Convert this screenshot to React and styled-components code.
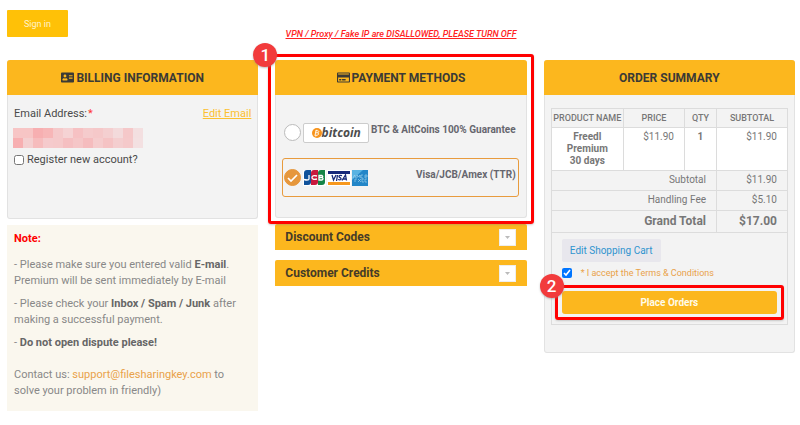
import { useState } from 'react';
import styled, { createGlobalStyle } from 'styled-components';
import { FaAddressCard, FaRegCreditCard } from 'react-icons/fa';

const GlobalStyle = createGlobalStyle`
	* {
		box-sizing: border-box;
	}

	body {
		margin: 0;
		background: #fff;
		color: #777;
		font-family: Roboto, 'Noto Sans', sans-serif;
		font-size: 11px;
		line-height: 16px;
	}

	button,
	input {
		font-family: inherit;
		margin: 0;
	}

	p {
		margin: 0;
	}
`;

const Page = styled.main`
	padding: 10px 5px 14px 7px;
`;

const TopBar = styled.div`
	height: 50px;
	display: grid;
	grid-template-columns: 1fr auto 1fr;
	align-items: start;
`;

const SignInButton = styled.button`
	justify-self: start;
	width: 61px;
	height: 27px;
	border: 0;
	border-radius: 1px;
	background: #ffc107;
	color: #fff3cd;
	font-size: 9px;
	cursor: pointer;
`;

const Warning = styled.p`
	padding-top: 16px;
	color: #f22;
	font-size: 9px;
	line-height: 16px;
	font-style: italic;
	font-weight: 500;
	text-decoration: underline;
`;

const Columns = styled.div`
	display: grid;
	grid-template-columns: repeat(3, minmax(0, 1fr));
	gap: 17px;
	align-items: start;
`;

const Column = styled.div`
	display: flex;
	flex-direction: column;
`;

const Card = styled.section`
	min-height: ${({ $minHeight }) => $minHeight || 0}px;
	border: 1px solid #e2e2e2;
	border-top: 0;
	border-radius: 3px;
	background: #f3f3f3;
`;

const CardTitle = styled.h2`
	display: flex;
	align-items: center;
	justify-content: center;
	gap: 2px;
	height: 35px;
	margin: 0 -1px;
	border-radius: 3px 3px 0 0;
	background: #fcb71e;
	color: #3b3a35;
	font-size: 12px;
	font-weight: 700;

	svg {
		width: 13px;
		height: 13px;
	}
`;

const BillingBody = styled.div`
	display: flex;
	flex-direction: column;
	padding: 11px 6px;
	color: #4a4a4a;
`;

const EmailRow = styled.div`
	display: flex;
	justify-content: space-between;
	margin-bottom: 6px;
`;

const Required = styled.span`
	padding-left: 1px;
	color: #f33;
`;

const EditLink = styled.a`
	color: #fcc02f;
`;

const Mosaic = styled.svg`
	display: block;
	width: 130px;
	height: 20px;
	margin: 0 -1px 4px;
`;

const CheckLabel = styled.label`
	display: flex;
	align-items: center;
	gap: 3px;

	input {
		width: 10px;
		height: 10px;
	}
`;

const Note = styled.section`
	display: flex;
	flex-direction: column;
	gap: 7px;
	margin-top: 6px;
	padding: 6px 7px 12px;
	background: #faf7ee;
	color: #888;

	strong {
		color: #666;
	}

	a {
		color: #e9a24a;
		text-decoration: none;
	}
`;

const NoteTitle = styled.h3`
	margin: 0 0 3px;
	color: #f00;
	font-size: 11px;
`;

const Contact = styled.p`
	padding-top: 9px;
`;

const Highlighted = styled.div`
	position: relative;
`;

const RedFrame = styled.div`
	position: absolute;
	inset: -6px -7px;
	border: 3px solid #f00;
	border-radius: 3px;
	box-shadow: 0 1px 2px #8886;
	pointer-events: none;
`;

const StepBadge = styled.span`
	position: absolute;
	top: -17px;
	left: -22px;
	width: 24px;
	height: 24px;
	border-radius: 50%;
	background: #f23b3c;
	color: #fff;
	font-size: 17px;
	font-weight: 500;
	line-height: 24px;
	text-align: center;
	box-shadow: 0 1px 2px #8888;
`;

const Methods = styled.div`
	display: flex;
	flex-direction: column;
	gap: 6px;
	padding: 18px 7px 20px 6px;
`;

const Method = styled.label`
	display: flex;
	align-items: center;
	height: 39px;
	gap: 2px;
	padding: 0 2px 0 1px;
	border: 1px solid ${({ $active }) => ($active ? '#e89b3d' : 'transparent')};
	border-radius: 3px;
	color: #66666e;
	cursor: pointer;
`;

const Radio = styled.input`
	appearance: none;
	flex: none;
	width: 17px;
	height: 17px;
	border: 1px solid #bbb;
	border-radius: 50%;
	background: #fff;

	&:checked {
		border-color: #e6973c;
		background: #e6973c
			url("data:image/svg+xml,%3Csvg xmlns='http://www.w3.org/2000/svg' viewBox='0 0 15 15' fill='none' stroke='white' stroke-width='1.7'%3E%3Cpath d='M3 8l3 3 6-6'/%3E%3C/svg%3E");
	}
`;

const MethodName = styled.span`
	align-self: flex-start;
	flex: 1;
	padding-top: 8px;
	font-size: 10px;
	font-weight: 700;
	text-align: right;
	white-space: nowrap;
`;

const BitcoinLogo = styled.span`
	display: flex;
	align-items: center;
	justify-content: center;
	width: 66px;
	height: 20px;
	border: 1px solid #ccc;
	border-radius: 2px;
	background: #fff;
	color: #4d4d4d;
	font-family: 'Open Sans', sans-serif;
	font-size: 12px;
	font-style: italic;
	font-weight: 700;
`;

const CardLogos = styled.svg`
	flex: none;
	width: 66px;
	height: 16px;
`;

const Folded = styled.section`
	display: flex;
	align-items: center;
	justify-content: space-between;
	height: 26px;
	margin-top: ${({ $gap }) => $gap}px;
	padding: 0 11px 0 10px;
	border-radius: 2px 2px 0 0;
	background: #fcb71e;
	color: #453b28;

	h3 {
		margin: 0;
		font-size: 12px;
	}
`;

const FoldButton = styled.button`
	display: flex;
	align-items: center;
	justify-content: center;
	width: 17px;
	height: 17px;
	padding: 0;
	border: 1px solid #eee;
	background: #fff;
`;

const OrderBody = styled.div`
	padding: 13px 6px 27px;
`;

const OrderTable = styled.table`
	width: 100%;
	border-collapse: collapse;
	table-layout: fixed;
	font-size: 10px;
	line-height: 12px;
	color: #777;

	th,
	td {
		border: 1px solid #dcdcdc;
		padding: 3px 10px;
		text-align: right;
		vertical-align: top;
	}

	thead th {
		height: 19px;
		padding: 3px 0;
		font-size: 9px;
		font-weight: 500;
		text-align: center;
		white-space: nowrap;
	}

	tbody td {
		height: 43px;
		background: #fff;
	}

	tfoot th {
		font-weight: 400;
	}

	tfoot td,
	tfoot th {
		height: 20px;
	}
`;

const Product = styled.td`
	&& {
		font-weight: 700;
		text-align: center;
	}
`;

const GrandTotal = styled.tr`
	&& th,
	&& td {
		height: 22px;
		padding-top: 2px;
		padding-bottom: 2px;
		font-size: 12px;
		line-height: 16px;
		font-weight: 700;
	}
`;

const OrderActions = styled.div`
	display: flex;
	flex-direction: column;
	align-items: stretch;
	padding: 6px 10px 10px;
	border: 1px solid #dcdcdc;
	border-top: 0;
`;

const CartButton = styled.button`
	align-self: flex-start;
	width: 99px;
	height: 23px;
	padding: 0;
	border: 0;
	border-radius: 2px;
	background: #e8e7ed;
	color: #2f94cf;
	font-size: 10px;
`;

const Terms = styled.label`
	display: flex;
	align-items: center;
	gap: 9px;
	height: 22px;
	margin-bottom: 7px;
	color: #e9a24a;
	font-size: 9px;

	input {
		width: 10px;
		height: 10px;
	}
`;

const PlaceButton = styled.button`
	display: block;
	width: 100%;
	height: 23px;
	border: 0;
	border-radius: 3px;
	background: #fcb71e;
	color: #fffbe8;
	font-size: 10px;
	font-weight: 700;
`;

const mosaicRows = [
	['#f7c5c5', '#f7c5c5', '#f7afb1', '#f7b6b7', '#f5c9ca', '#f5d3d4', '#f6c1c3', '#f5cbcc', '#f5c8c9', '#f4cfd0', '#f3dadb', '#f5c8c9', '#f3dfe0'],
	['#f7afb1', '#f4cfd0', '#f6bcbd', '#f5cacc', '#f5c9ca', '#f5bfc1', '#f5c6c7', '#f5bcbe', '#f5cccd', '#f5c3c4', '#f4cecf', '#f5c9ca', '#f3e0e1'],
];

const HiddenEmail = () => (
	<Mosaic viewBox="0 0 130 20" shapeRendering="crispEdges" aria-hidden="true">
		{mosaicRows.map((row, y) =>
			row.map((color, x) => (
				<rect key={`${x}-${y}`} x={x * 10} y={y * 10} width="10" height="10" fill={color} />
			)),
		)}
	</Mosaic>
);

const BitcoinMark = () => (
	<svg width="10" height="10" viewBox="0 0 20 20" aria-hidden="true">
		<circle cx="10" cy="10" r="10" fill="#f7931a" />
		<path
			d="M8 5l-2 10M7 5.500h4.500c3 0 2.500 4-.5 4H7M11 9.500c3.500 0 2.500 5-1 5H5.500M9.500 3.500l-.4 2M8 15l-.4 2"
			fill="none"
			stroke="#fff"
			strokeWidth="1.800"
		/>
	</svg>
);

const CardBrands = () => (
	<CardLogos viewBox="0 0 66 16" aria-hidden="true">
		<rect width="23" height="16" rx="1" fill="#fff" />
		<path d="M4 0h4v12q0 3-3 3H1V3q0-3 3-3z" fill="#10529b" />
		<path d="M11 0h4v12q0 3-3 3H8V3q0-3 3-3z" fill="#c8193d" />
		<path d="M18 0h4v12q0 3-3 3h-4V3q0-3 3-3z" fill="#158447" />
		<path
			d="M6 5v4q0 1-2 1-1 0-3-.5M14 6q-5-1-5 1.500t5 1.500M16 5.500h3q1.500 1 0 2h-3zM16 7.500h3q2 1 0 2.500h-3z"
			fill="none"
			stroke="#fff"
			strokeWidth="1.300"
		/>
		<rect x="24" width="24" height="16" fill="#fff" />
		<path d="M25 1h22v3H25z" fill="#17297a" />
		<path d="M25 12h22v3H25z" fill="#f7981d" />
		<path
			d="M29 5l1.500 5L33 5M34.500 5l-1 6M39 5.700c-3-1-4 1-2 2s1 3-2 1.800M39 10.500L42.500 5l1 5.500M40.500 9h2.500"
			fill="none"
			stroke="#17297a"
			strokeWidth="1.300"
		/>
		<rect x="49" width="16" height="16" fill="#2386c8" />
		<path d="M49 0h11L49 10z" fill="#59b3e2" />
		<path
			d="M50 8l1.500-3L53 8M54 8V5l1.500 2L57 5v3M60 5h-2v3h2M62 8V5h2v2h-2M52 9v3M52 9h2M55 12l3-3M55 9l3 3M61 9h-2v3h2M64 9h-2v3h2"
			fill="none"
			stroke="#a9d8ef"
			strokeWidth=".6"
		/>
	</CardLogos>
);

const FoldedPanel = ({ title, gap }) => (
	<Folded $gap={gap}>
		<h3>{title}</h3>
		<FoldButton type="button" aria-label={title}>
			<svg width="5" height="3" viewBox="0 0 5 3">
				<path d="M0 0h5L2.500 3z" fill="#bbb" />
			</svg>
		</FoldButton>
	</Folded>
);

const Billing = () => (
	<Column>
		<Card $minHeight={159}>
			<CardTitle>
				<FaAddressCard />
				BILLING INFORMATION
			</CardTitle>
			<BillingBody>
				<EmailRow>
					<span>
						Email Address:<Required>*</Required>
					</span>
					<EditLink href="#email">Edit Email</EditLink>
				</EmailRow>
				<HiddenEmail />
				<CheckLabel>
					<input type="checkbox" />
					Register new account?
				</CheckLabel>
			</BillingBody>
		</Card>
		<Note>
			<NoteTitle>Note:</NoteTitle>
			<p>
				- Please make sure you entered valid <strong>E-mail</strong>.<br />
				Premium will be sent immediately by E-mail
			</p>
			<p>
				- Please check your <strong>Inbox / Spam / Junk</strong> after
				<br />
				making a successful payment.
			</p>
			<p>
				- <strong>Do not open dispute please!</strong>
			</p>
			<Contact>
				Contact us: <a href="mailto:support@filesharingkey.com">support@filesharingkey.com</a> to
				<br />
				solve your problem in friendly)
			</Contact>
		</Note>
	</Column>
);

const Payment = () => {
	const [method, setMethod] = useState('card');

	return (
		<Column>
			<Highlighted>
				<Card $minHeight={158}>
					<CardTitle>
						<FaRegCreditCard />
						PAYMENT METHODS
					</CardTitle>
					<Methods>
						<Method $active={method === 'bitcoin'}>
							<Radio
								type="radio"
								name="method"
								checked={method === 'bitcoin'}
								onChange={() => setMethod('bitcoin')}
							/>
							<BitcoinLogo>
								<BitcoinMark />
								bitcoin
							</BitcoinLogo>
							<MethodName>BTC &amp; AltCoins 100% Guarantee</MethodName>
						</Method>
						<Method $active={method === 'card'}>
							<Radio
								type="radio"
								name="method"
								checked={method === 'card'}
								onChange={() => setMethod('card')}
							/>
							<CardBrands />
							<MethodName>Visa/JCB/Amex (TTR)</MethodName>
						</Method>
					</Methods>
				</Card>
				<RedFrame />
				<StepBadge>1</StepBadge>
			</Highlighted>
			<FoldedPanel title="Discount Codes" gap={6} />
			<FoldedPanel title="Customer Credits" gap={10} />
		</Column>
	);
};

const Summary = () => {
	const [accepted, setAccepted] = useState(true);

	return (
		<Card>
			<CardTitle>ORDER SUMMARY</CardTitle>
			<OrderBody>
				<OrderTable>
					<colgroup>
						<col />
						<col width="61" />
						<col width="32" />
						<col width="71" />
					</colgroup>
					<thead>
						<tr>
							<th>PRODUCT NAME</th>
							<th>PRICE</th>
							<th>QTY</th>
							<th>SUBTOTAL</th>
						</tr>
					</thead>
					<tbody>
						<tr>
							<Product>
								Freedl
								<br />
								Premium
								<br />
								30 days
							</Product>
							<td>$11.90</td>
							<Product>1</Product>
							<td>$11.90</td>
						</tr>
					</tbody>
					<tfoot>
						<tr>
							<th colSpan="3">Subtotal</th>
							<td>$11.90</td>
						</tr>
						<tr>
							<th colSpan="3">Handling Fee</th>
							<td>$5.10</td>
						</tr>
						<GrandTotal>
							<th colSpan="3">Grand Total</th>
							<td>$17.00</td>
						</GrandTotal>
					</tfoot>
				</OrderTable>
				<OrderActions>
					<CartButton type="button">Edit Shopping Cart</CartButton>
					<Terms>
						<input
							type="checkbox"
							checked={accepted}
							onChange={({ target }) => setAccepted(target.checked)}
						/>
						* I accept the Terms &amp; Conditions
					</Terms>
					<Highlighted>
						<PlaceButton type="button">Place Orders</PlaceButton>
						<RedFrame />
						<StepBadge>2</StepBadge>
					</Highlighted>
				</OrderActions>
			</OrderBody>
		</Card>
	);
};

const App = () => (
	<>
		<GlobalStyle />
		<Page>
			<TopBar>
				<SignInButton type="button">Sign in</SignInButton>
				<Warning>VPN / Proxy / Fake IP are DISALLOWED, PLEASE TURN OFF</Warning>
			</TopBar>
			<Columns>
				<Billing />
				<Payment />
				<Summary />
			</Columns>
		</Page>
	</>
);

export default App;
